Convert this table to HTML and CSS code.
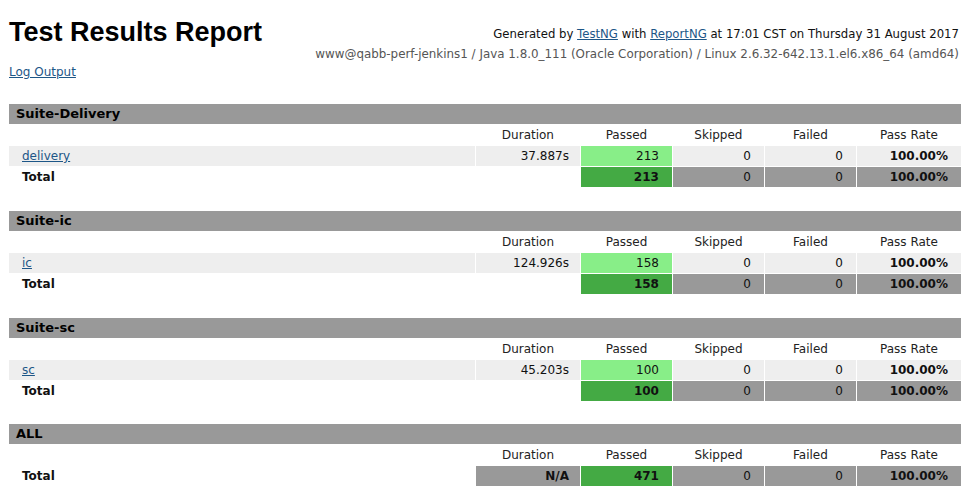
FILE: index.html
```html
<!DOCTYPE html>
<html>
<head>
<meta charset="utf-8">
<title>Test Results Report</title>
<link rel="stylesheet" href="styles.css">
</head>
<body>
<div class="top">
  <h1 class="title">Test Results Report</h1>
  <div class="meta">
    <div class="gen">Generated by <a href="#">TestNG</a> with <a href="#">ReportNG</a> at 17:01 CST on Thursday 31 August 2017</div>
    <div class="sys">www@qabb-perf-jenkins1 / Java 1.8.0_111 (Oracle Corporation) / Linux 2.6.32-642.13.1.el6.x86_64 (amd64)</div>
  </div>
</div>
<div class="log"><a href="#">Log Output</a></div>

<table class="overview">
  <colgroup><col><col class="c-dur"><col class="c-num"><col class="c-num"><col class="c-num"><col class="c-rate"></colgroup>
  <tr><th colspan="6" class="suite">Suite-Delivery</th></tr>
  <tr class="heads"><td></td><th>Duration</th><th>Passed</th><th>Skipped</th><th>Failed</th><th>Pass Rate</th></tr>
  <tr class="test"><td class="name"><a href="#">delivery</a></td><td class="dur">37.887s</td><td class="num pass">213</td><td class="num zero">0</td><td class="num zero">0</td><td class="num rate zero">100.00%</td></tr>
  <tr class="total"><td colspan="2" class="label">Total</td><td class="num tpass">213</td><td class="num tgrey">0</td><td class="num tgrey">0</td><td class="num tgrey">100.00%</td></tr>
</table>

<table class="overview">
  <colgroup><col><col class="c-dur"><col class="c-num"><col class="c-num"><col class="c-num"><col class="c-rate"></colgroup>
  <tr><th colspan="6" class="suite">Suite-ic</th></tr>
  <tr class="heads"><td></td><th>Duration</th><th>Passed</th><th>Skipped</th><th>Failed</th><th>Pass Rate</th></tr>
  <tr class="test"><td class="name"><a href="#">ic</a></td><td class="dur">124.926s</td><td class="num pass">158</td><td class="num zero">0</td><td class="num zero">0</td><td class="num rate zero">100.00%</td></tr>
  <tr class="total"><td colspan="2" class="label">Total</td><td class="num tpass">158</td><td class="num tgrey">0</td><td class="num tgrey">0</td><td class="num tgrey">100.00%</td></tr>
</table>

<table class="overview">
  <colgroup><col><col class="c-dur"><col class="c-num"><col class="c-num"><col class="c-num"><col class="c-rate"></colgroup>
  <tr><th colspan="6" class="suite">Suite-sc</th></tr>
  <tr class="heads"><td></td><th>Duration</th><th>Passed</th><th>Skipped</th><th>Failed</th><th>Pass Rate</th></tr>
  <tr class="test"><td class="name"><a href="#">sc</a></td><td class="dur">45.203s</td><td class="num pass">100</td><td class="num zero">0</td><td class="num zero">0</td><td class="num rate zero">100.00%</td></tr>
  <tr class="total"><td colspan="2" class="label">Total</td><td class="num tpass">100</td><td class="num tgrey">0</td><td class="num tgrey">0</td><td class="num tgrey">100.00%</td></tr>
</table>

<table class="overview all">
  <colgroup><col><col class="c-dur"><col class="c-num"><col class="c-num"><col class="c-num"><col class="c-rate"></colgroup>
  <tr><th colspan="6" class="suite">ALL</th></tr>
  <tr class="heads"><td></td><th>Duration</th><th>Passed</th><th>Skipped</th><th>Failed</th><th>Pass Rate</th></tr>
  <tr class="total"><td class="label">Total</td><td class="dur tgrey bold">N/A</td><td class="num tpass">471</td><td class="num tgrey">0</td><td class="num tgrey">0</td><td class="num tgrey">100.00%</td></tr>
</table>
</body>
</html>
```

FILE: styles.css
```css
html, body {
  background: #ffffff;
}
body {
  margin: 0 4px 0 8px;
  font-family: "DejaVu Sans", sans-serif;
  font-size: 12px;
  color: #111;
}
a {
  color: #1d5687;
  text-decoration: underline;
}
.top {
  display: flex;
  justify-content: space-between;
  align-items: flex-start;
  padding-left: 1px;
}
.title {
  margin: 16px 0 0 0;
  font-family: "Liberation Sans", Arial, sans-serif;
  font-weight: bold;
  font-size: 27px;
  line-height: 32px;
  color: #000;
}
.meta {
  margin-top: 24px;
  text-align: right;
  line-height: 20px;
  font-size: 11.9px;
  padding-right: 3px;
}
.gen {
  color: #111;
  font-size: 11.7px;
}
.sys {
  color: #555;
}
.log {
  margin-top: -2px;
  padding-left: 1px;
  line-height: 20px;
}
table.overview {
  width: 100%;
  table-layout: fixed;
  border-collapse: separate;
  border-spacing: 1px;
  margin-top: 21px;
}
table.overview + table.overview {
  margin-top: 22px;
}
table.overview + table.overview.all {
  margin-top: 21px;
}
col.c-dur { width: 104px; }
col.c-num { width: 91px; }
col.c-rate { width: 104px; }
.overview th, .overview td {
  height: 20px;
  padding: 0;
  line-height: 20px;
  font-size: 12px;
  white-space: nowrap;
}
.overview th.suite {
  background: #999999;
  text-align: left;
  padding-left: 7px;
  font-size: 13px;
  font-weight: bold;
  color: #000;
}
.heads th {
  font-weight: normal;
  text-align: center;
  color: #222;
}
.test td {
  background: #eeeeee;
}
.test td, .total td {
  padding-top: 1px !important;
  height: 19px;
  line-height: 19px;
}
.name {
  padding-left: 13px !important;
}
.dur {
  text-align: right;
  padding-right: 11px !important;
}
.num {
  text-align: right;
  padding-right: 13px !important;
}
.overview .pass {
  background: #88ee88;
}
.overview .rate {
  font-weight: bold;
}
.total td {
  font-weight: bold;
}
.total .num.tgrey:not(:last-child) {
  font-weight: normal;
}
.label {
  padding-left: 13px !important;
  background: #ffffff;
}
.overview .tpass {
  background: #44aa44;
}
.overview .tgrey {
  background: #999999;
}
.bold {
  font-weight: bold;
}
```
